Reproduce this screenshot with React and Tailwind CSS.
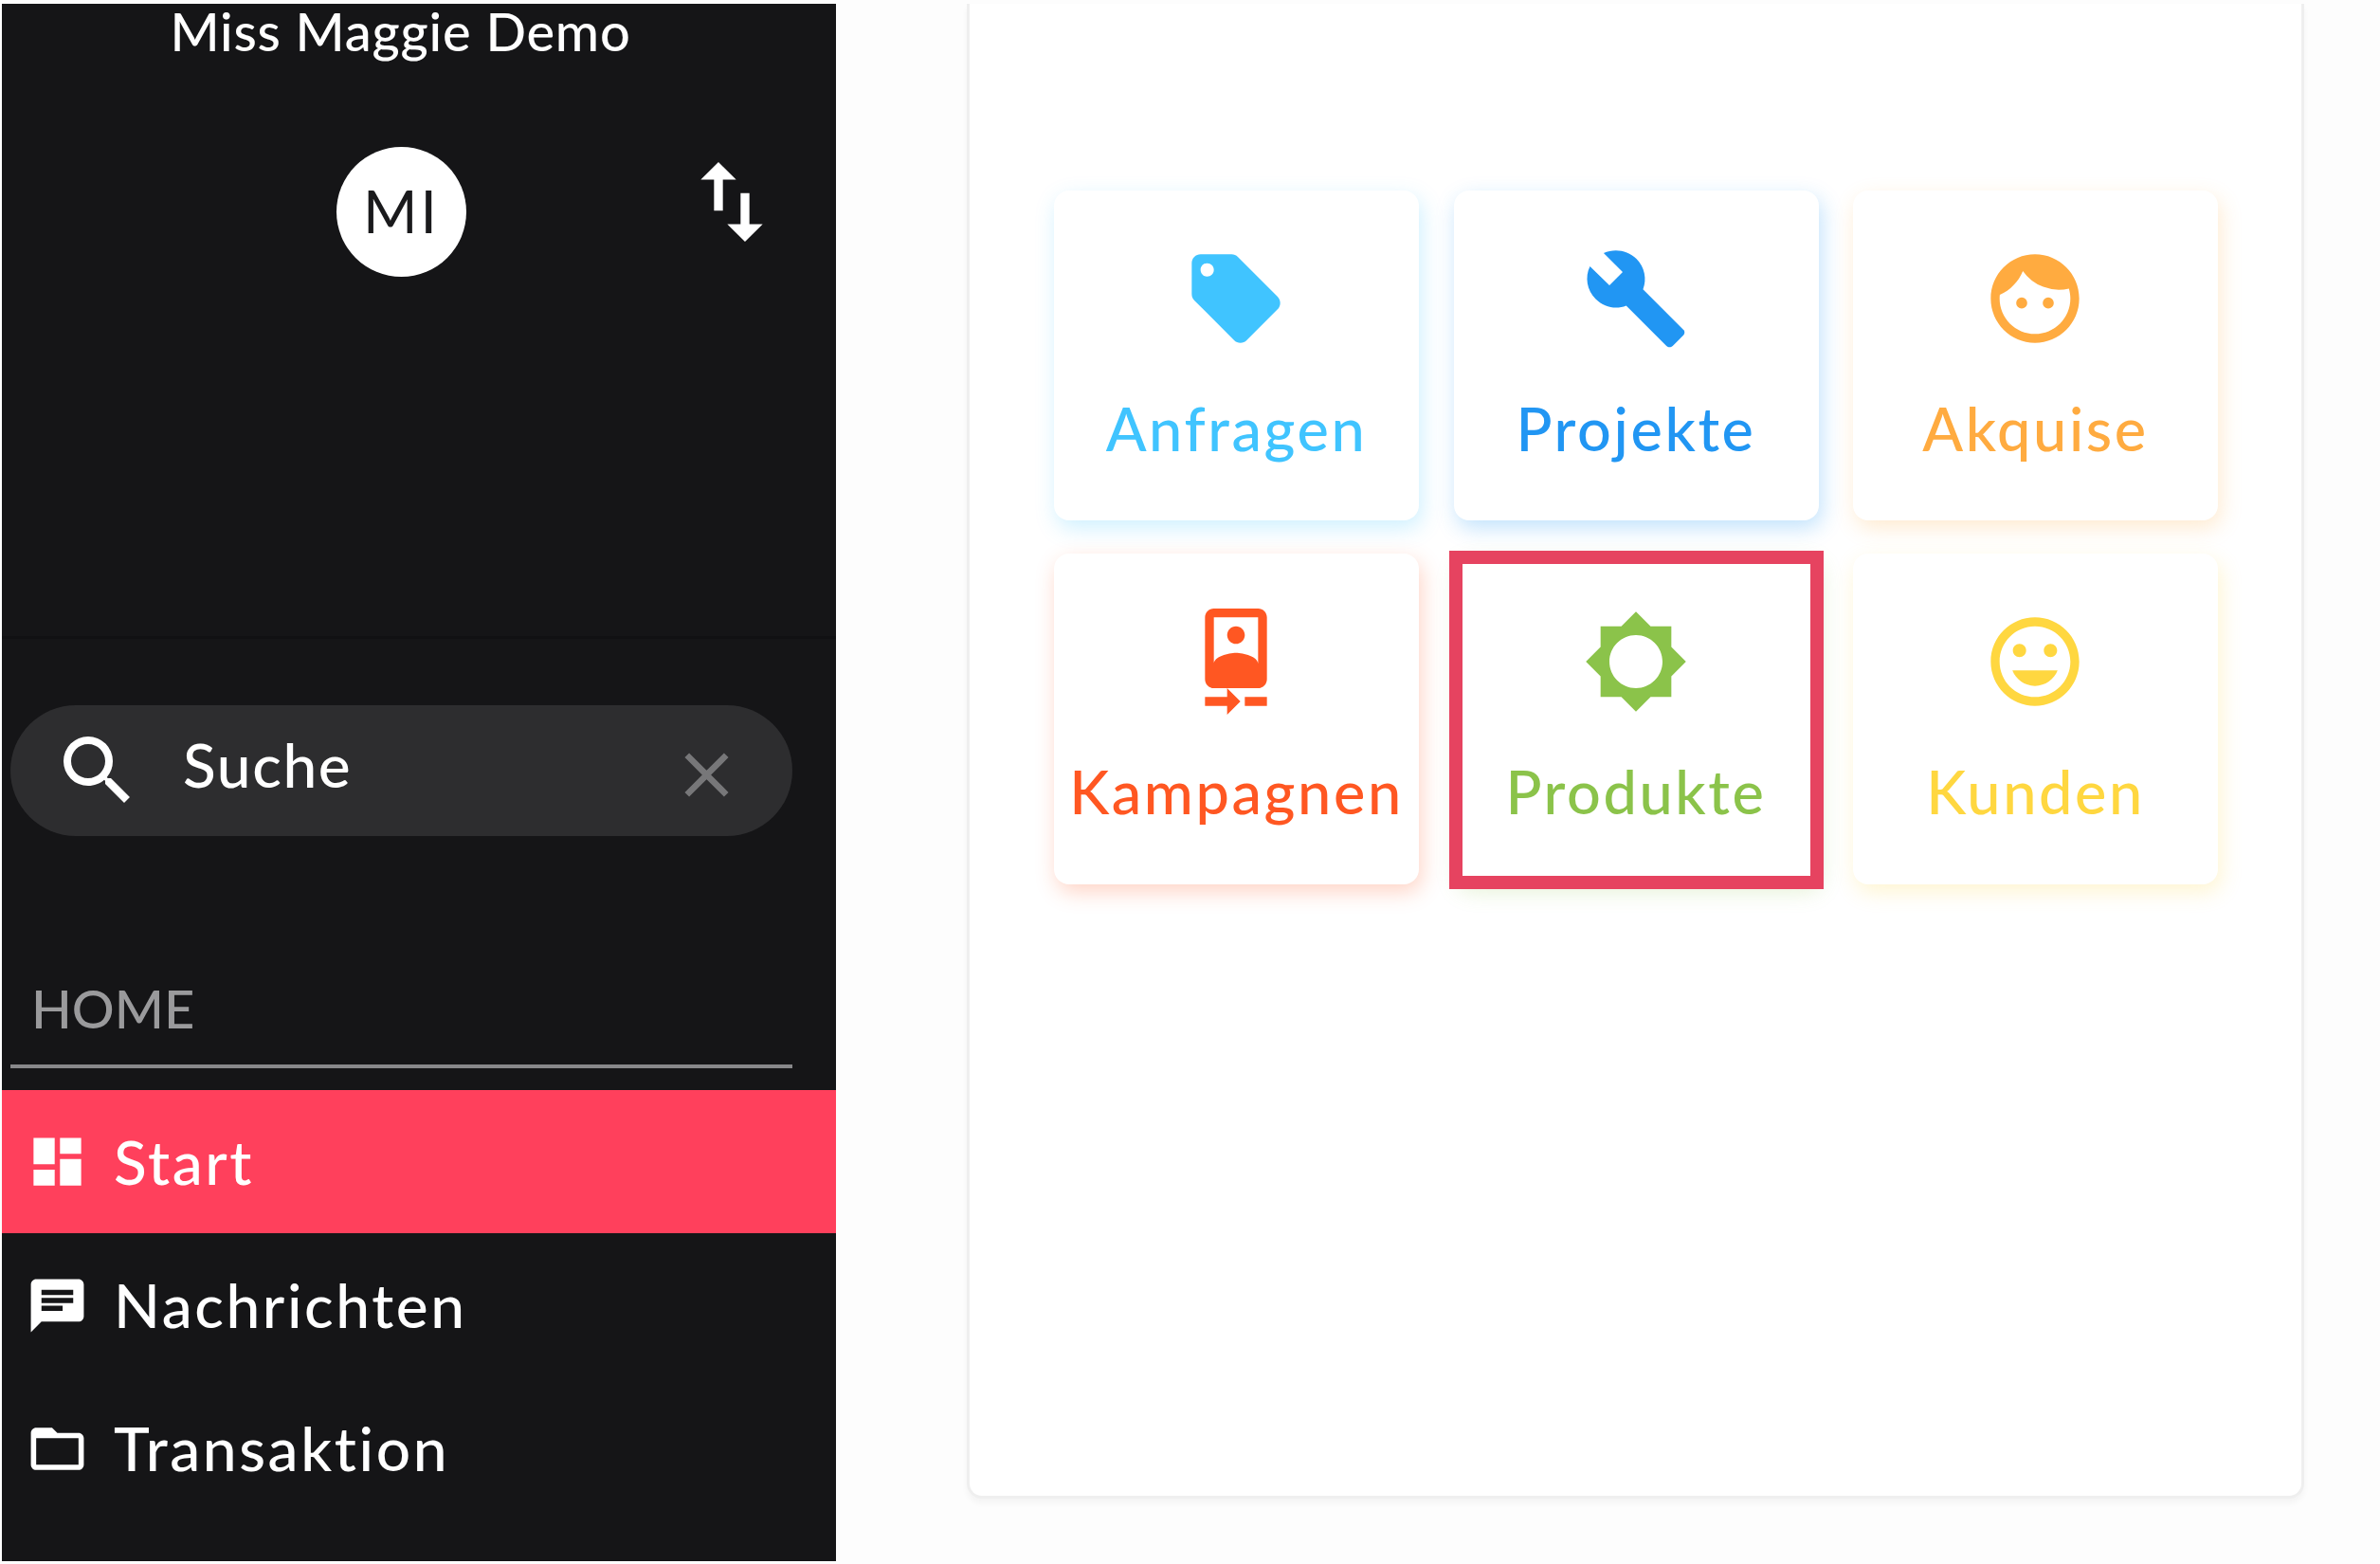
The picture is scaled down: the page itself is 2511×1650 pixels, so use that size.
import React from 'react';
import {
  MdBrightness5,
  MdBuild,
  MdCameraFront,
  MdChat,
  MdClose,
  MdDashboard,
  MdFace,
  MdFolderOpen,
  MdImportExport,
  MdLocalOffer,
  MdSearch,
  MdTagFaces,
} from 'react-icons/md';

const tiles = [
  { label: 'Anfragen', Icon: MdLocalOffer, tone: 'text-[#40c4ff] shadow-[3px_8px_22px_rgba(64,196,255,0.26)]' },
  { label: 'Projekte', Icon: MdBuild, tone: 'text-[#2196f3] shadow-[3px_8px_22px_rgba(33,150,243,0.28)]' },
  { label: 'Akquise', Icon: MdFace, tone: 'text-[#ffab40] shadow-[3px_8px_22px_rgba(255,171,64,0.24)]' },
  { label: 'Kampagnen', Icon: MdCameraFront, tone: 'text-[#ff5722] shadow-[3px_8px_22px_rgba(255,87,34,0.26)]' },
  { label: 'Produkte', Icon: MdBrightness5, tone: 'text-[#8bc34a] shadow-[3px_8px_22px_rgba(139,195,74,0.22)]', marked: true },
  { label: 'Kunden', Icon: MdTagFaces, tone: 'text-[#ffd740] shadow-[3px_8px_22px_rgba(255,215,64,0.24)]' },
];

const navItems = [
  { label: 'Start', Icon: MdDashboard, height: 'h-[151px]', active: true },
  { label: 'Nachrichten', Icon: MdChat, height: 'h-[152px]' },
  { label: 'Transaktion', Icon: MdFolderOpen, height: 'h-[150px]' },
];

const Tile = ({ label, Icon, tone, marked }) => (
  <div className={`relative flex flex-col items-center rounded-2xl bg-white pt-[58px] ${tone}`}>
    <Icon size={112} className="-ml-[1px] shrink-0" />
    <span className="mt-[49px] text-[63px] leading-none font-medium tracking-[2.6px]">{label}</span>
    {marked && (
      <div className="absolute -top-[3px] -right-[5px] -bottom-[5px] -left-[5px] border-[14px] border-[#e64360]" />
    )}
  </div>
);

const Sidebar = () => (
  <aside className="flex h-[1643px] w-[880px] shrink-0 flex-col bg-[#151517] text-white">
    <div className="h-[670px] shrink-0 border-b-[3px] border-[#111113]">
      <div className="ml-[9px] w-[825px]">
        <h1 className="pt-[1px] pr-[2px] text-center text-[56px] leading-none font-medium tracking-[0.8px]">
          Miss Maggie Demo
        </h1>
        <div className="mt-[94px] grid grid-cols-[1fr_137px_1fr]">
          <div className="col-start-2 flex h-[137px] w-[137px] items-center justify-center rounded-full bg-white pb-[2px] text-[62px] tracking-[3px] text-[#1a1a1c]">
            MI
          </div>
          <MdImportExport size={112} className="mt-[2px] mr-[8px] justify-self-end" />
        </div>
      </div>
    </div>

    <div className="mt-[70px] ml-[9px] w-[825px]">
      <div className="flex h-[138px] items-center rounded-full bg-[#2d2d2f] pr-[51px] pl-[44px]">
        <MdSearch size={96} className="shrink-0" />
        <span className="mb-[12px] ml-[42px] flex-1 text-[64px] leading-none font-medium tracking-[1.6px]">Suche</span>
        <MdClose size={79} className="mt-[8px] shrink-0 text-[#777779]" />
      </div>
      <div className="mt-[153px] border-b-[4px] border-[#88888a] pb-[30px] pl-[22px] text-[56px] leading-[58px] font-medium text-[#9a9a9c]">
        HOME
      </div>
    </div>

    <nav className="mt-[23px]">
      {navItems.map(({ label, Icon, height, active }) => (
        <div
          key={label}
          className={`flex items-center pl-[25px] text-[64px] leading-none font-medium tracking-[2.6px] ${height} ${active ? 'bg-[#ff405c]' : ''}`}
        >
          <Icon size={67} className="shrink-0" />
          <span className="ml-[26px]">{label}</span>
        </div>
      ))}
    </nav>
  </aside>
);

export default function App() {
  return (
    <div className="flex h-[1650px] w-[2511px] items-start overflow-hidden bg-[#fdfdfd] pt-[4px] pl-[2px] font-['Lato',sans-serif]">
      <Sidebar />
      <main className="ml-[138px] h-[1577px] w-[1411px] rounded-b-2xl border-x-[3px] border-b-[3px] border-[#efefef] bg-white pt-[197px] pl-[89px] shadow-[0_5px_6px_rgba(0,0,0,0.04)]">
        <div className="grid grid-cols-[385px_385px_385px] grid-rows-[348px_349px] gap-x-[36.5px] gap-y-[35px]">
          {tiles.map((tile) => (
            <Tile key={tile.label} {...tile} />
          ))}
        </div>
      </main>
    </div>
  );
}
